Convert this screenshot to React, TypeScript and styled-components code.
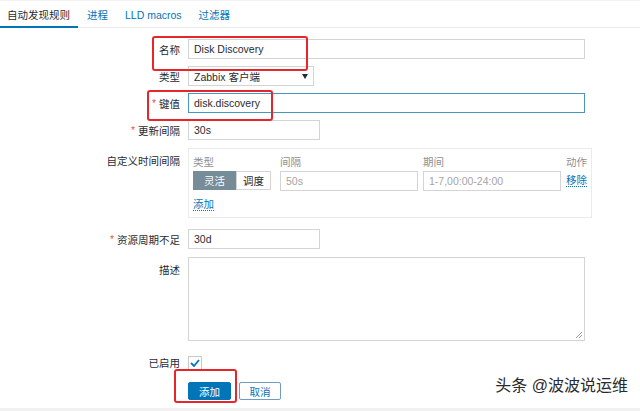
import React from 'react';
import styled, { createGlobalStyle } from 'styled-components';

const GlobalStyle = createGlobalStyle`
  html, body {
    margin: 0;
    padding: 0;
    background: #ffffff;
  }
`;

const Page = styled.div`
  position: relative;
  width: 640px;
  height: 411px;
  overflow: hidden;
  background: #fff;
  font-family: 'Liberation Sans', 'Noto Sans CJK SC', Arial, sans-serif;
  font-size: 10.5px;
  color: #1f2c33;
  border-top: 1px solid #f2f2f2;
  box-sizing: border-box;
`;

const TabBar = styled.div`
  display: flex;
  height: 26px;
  border-bottom: 1px solid #ebebeb;
`;

const Tab = styled.div<{ $active?: boolean }>`
  display: flex;
  align-items: center;
  padding: 0 8px 0 7px;
  margin-right: 2px;
  color: ${(p) => (p.$active ? '#1f2c33' : '#0275b8')};
  border-bottom: 2px solid ${(p) => (p.$active ? '#0275b8' : 'transparent')};
  margin-bottom: -1px;
  padding-top: 2px;
`;

const Form = styled.div`
  display: flex;
  flex-direction: column;
  padding-top: 11px;
`;

const Row = styled.div<{ $gap?: number }>`
  display: grid;
  grid-template-columns: 180px 1fr;
  column-gap: 8px;
  margin-top: ${(p) => p.$gap ?? 0}px;
`;

const Label = styled.div<{ $top?: boolean }>`
  display: flex;
  justify-content: flex-end;
  align-items: ${(p) => (p.$top ? 'flex-start' : 'center')};
  padding-top: ${(p) => (p.$top ? '5px' : '0')};
  color: #1f2c33;
  white-space: nowrap;
`;

const Star = styled.span`
  color: #e45959;
  margin-right: 3px;
`;

const Field = styled.div`
  display: flex;
  align-items: center;
`;

const TextInput = styled.div<{ $width: number; $focus?: boolean; $muted?: boolean }>`
  box-sizing: border-box;
  width: ${(p) => p.$width}px;
  height: 20px;
  display: flex;
  align-items: center;
  padding: 0 5px;
  border: 1px solid ${(p) => (p.$focus ? '#4796c4' : '#d4d4d4')};
  color: ${(p) => (p.$muted ? '#a5a5a5' : '#1f2c33')};
  background: #fff;
`;

const Select = styled.div`
  box-sizing: border-box;
  width: 126px;
  height: 20px;
  display: flex;
  align-items: center;
  justify-content: space-between;
  padding: 0 5px;
  border: 1px solid #d4d4d4;
  background: #fff;
`;

const Caret = styled.span`
  width: 0;
  height: 0;
  border-left: 3px solid transparent;
  border-right: 3px solid transparent;
  border-top: 5px solid #1f2c33;
`;

const IntervalBox = styled.div`
  box-sizing: border-box;
  width: 404px;
  height: 70px;
  border: 1px solid #ebebeb;
  padding: 4px 4px 0 4px;
  display: grid;
  grid-template-columns: 82px 138px 138px 1fr;
  grid-template-rows: 16px 19px 24px;
  column-gap: 5px;
  row-gap: 2px;
  align-items: center;
`;

const ColHead = styled.div<{ $right?: boolean }>`
  color: #8f8f8f;
  text-align: ${(p) => (p.$right ? 'right' : 'left')};
`;

const Toggle = styled.div`
  display: flex;
  height: 19px;
`;

const ToggleButton = styled.div<{ $on?: boolean }>`
  box-sizing: border-box;
  display: flex;
  align-items: center;
  justify-content: center;
  width: ${(p) => (p.$on ? 43 : 35)}px;
  height: 19px;
  background: ${(p) => (p.$on ? '#768d99' : '#fff')};
  color: ${(p) => (p.$on ? '#fff' : '#1f2c33')};
  border: 1px solid ${(p) => (p.$on ? '#768d99' : '#d4d4d4')};
`;

const LinkText = styled.span`
  color: #0275b8;
  border-bottom: 1px dotted #0275b8;
  line-height: 12px;
  justify-self: start;
`;

const TextArea = styled.div`
  position: relative;
  box-sizing: border-box;
  width: 397px;
  height: 84px;
  border: 1px solid #d4d4d4;
`;

const Grip = styled.svg`
  position: absolute;
  right: 1px;
  bottom: 1px;
`;

const Checkbox = styled.div`
  box-sizing: border-box;
  width: 14px;
  height: 14px;
  border: 1px solid #c9c9c9;
  display: flex;
  align-items: center;
  justify-content: center;
`;

const Buttons = styled.div`
  display: flex;
  gap: 8px;
`;

const Button = styled.div<{ $primary?: boolean }>`
  box-sizing: border-box;
  width: ${(p) => (p.$primary ? 43 : 42)}px;
  height: 18px;
  display: flex;
  align-items: center;
  justify-content: center;
  background: ${(p) => (p.$primary ? '#0275b8' : '#fff')};
  color: ${(p) => (p.$primary ? '#fff' : '#0275b8')};
  border: 1px solid ${(p) => (p.$primary ? '#0275b8' : '#6f9cbf')};
  border-radius: 2px;
`;

const Highlight = styled.div<{ $x: number; $y: number; $w: number; $h: number }>`
  position: absolute;
  left: ${(p) => p.$x}px;
  top: ${(p) => p.$y}px;
  width: ${(p) => p.$w}px;
  height: ${(p) => p.$h}px;
  box-sizing: border-box;
  border: 2px solid #e5262b;
  border-radius: 3px;
  pointer-events: none;
`;

const Watermark = styled.div`
  position: absolute;
  right: 12px;
  bottom: 15px;
  font-size: 16px;
  color: #2a2a2a;
  text-shadow: 1px 1px 1px #fff, -1px -1px 1px #fff;
  white-space: nowrap;
`;

const BottomStrip = styled.div`
  position: absolute;
  left: 0;
  right: 0;
  bottom: 0;
  height: 3px;
  background: #f1f1f1;
`;

export default function App() {
  return (
    <Page>
      <GlobalStyle />
      <TabBar>
        <Tab $active>自动发现规则</Tab>
        <Tab>进程</Tab>
        <Tab>LLD macros</Tab>
        <Tab>过滤器</Tab>
      </TabBar>

      <Form>
        <Row>
          <Label>名称</Label>
          <Field>
            <TextInput $width={397}>Disk Discovery</TextInput>
          </Field>
        </Row>

        <Row $gap={7}>
          <Label>类型</Label>
          <Field>
            <Select>
              <span>Zabbix 客户端</span>
              <Caret />
            </Select>
          </Field>
        </Row>

        <Row $gap={7}>
          <Label>
            <Star>*</Star>键值
          </Label>
          <Field>
            <TextInput $width={397} $focus>
              disk.discovery
            </TextInput>
          </Field>
        </Row>

        <Row $gap={7}>
          <Label>
            <Star>*</Star>更新间隔
          </Label>
          <Field>
            <TextInput $width={132}>30s</TextInput>
          </Field>
        </Row>

        <Row $gap={8}>
          <Label $top>自定义时间间隔</Label>
          <Field>
            <IntervalBox>
              <ColHead>类型</ColHead>
              <ColHead>间隔</ColHead>
              <ColHead>期间</ColHead>
              <ColHead $right>动作</ColHead>

              <Toggle>
                <ToggleButton $on>灵活</ToggleButton>
                <ToggleButton>调度</ToggleButton>
              </Toggle>
              <TextInput $width={138} $muted>
                50s
              </TextInput>
              <TextInput $width={138} $muted>
                1-7,00:00-24:00
              </TextInput>
              <LinkText>移除</LinkText>

              <LinkText>添加</LinkText>
            </IntervalBox>
          </Field>
        </Row>

        <Row $gap={11}>
          <Label>
            <Star>*</Star>资源周期不足
          </Label>
          <Field>
            <TextInput $width={132}>30d</TextInput>
          </Field>
        </Row>

        <Row $gap={8}>
          <Label $top>描述</Label>
          <Field>
            <TextArea>
              <Grip width="8" height="8" viewBox="0 0 8 8">
                <path d="M7 1L1 7M7 4L4 7" stroke="#9a9a9a" strokeWidth="1" />
              </Grip>
            </TextArea>
          </Field>
        </Row>

        <Row $gap={14}>
          <Label>已启用</Label>
          <Field>
            <Checkbox>
              <svg width="10" height="8" viewBox="0 0 10 8">
                <path
                  d="M1 4l3 3 5-6"
                  fill="none"
                  stroke="#0275b8"
                  strokeWidth="1.8"
                />
              </svg>
            </Checkbox>
          </Field>
        </Row>

        <Row $gap={12}>
          <div />
          <Buttons>
            <Button $primary>添加</Button>
            <Button>取消</Button>
          </Buttons>
        </Row>
      </Form>

      <Highlight $x={152} $y={35} $w={156} $h={35} />
      <Highlight $x={147} $y={89} $w={126} $h={31} />
      <Highlight $x={174} $y={368} $w={63} $h={34} />

      <Watermark>头条 @波波说运维</Watermark>
      <BottomStrip />
    </Page>
  );
}
